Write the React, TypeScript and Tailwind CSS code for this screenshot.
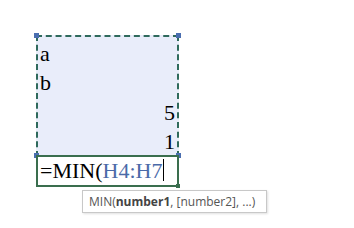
import React from 'react';

const serif = { fontFamily: '"Liberation Serif", "Times New Roman", serif' };

function Handle({ className }: { className: string }) {
  return <span className={`absolute w-[5px] h-[5px] bg-[#4a6eb0] ${className}`} />;
}

export default function App() {
  const rows = [
    { v: 'a', right: false },
    { v: 'b', right: false },
    { v: '5', right: true },
    { v: '1', right: true },
  ];

  return (
    <div className="w-[354px] h-[228px] bg-white pl-[36px] pt-[35px] overflow-hidden">
      <div className="relative w-[143px]">
        <div className="border-2 border-dashed border-[#2f6a5c] bg-[#e9edfa] h-[122px] flex flex-col" style={serif}>
          {rows.map((r) => (
            <div
              key={r.v}
              className={`h-[30px] flex items-end pb-[2px] text-[22px] leading-none text-black px-[2px] ${
                r.right ? 'justify-end' : 'justify-start'
              }`}
            >
              {r.v}
            </div>
          ))}
        </div>
        <Handle className="-left-[2px] -top-[2px]" />
        <Handle className="-right-[2px] -top-[2px]" />
        <Handle className="-left-[2px] top-[118px]" />
        <Handle className="-right-[2px] top-[118px]" />
        <div
          className="relative -mt-[2px] h-[32px] border-2 border-[#3a6e4e] bg-white flex items-end pb-[3px] px-[2px] text-[22px] leading-none"
          style={serif}
        >
          <span className="text-black">=MIN(</span>
          <span className="text-[#4a6aa8]">H4:H7</span>
          <span className="w-px h-[22px] bg-black ml-[1px] mb-[1px]" />
          <span className="absolute -right-[3px] -bottom-[3px] w-[4px] h-[4px] bg-[#3a6e4e]" />
        </div>
      </div>
      <div className="ml-[46px] mt-[3px] w-[185px] h-[23px] border border-[#c8c8c8] bg-white shadow-[1px_1px_2px_rgba(0,0,0,0.12)] flex items-center px-[6px] text-[12px] text-[#555]" style={{ fontFamily: '"Open Sans", "Liberation Sans", sans-serif' }}>
        <span>MIN(</span>
        <span className="font-bold text-[#444]">number1</span>
        <span>, [number2], ...)</span>
      </div>
    </div>
  );
}
